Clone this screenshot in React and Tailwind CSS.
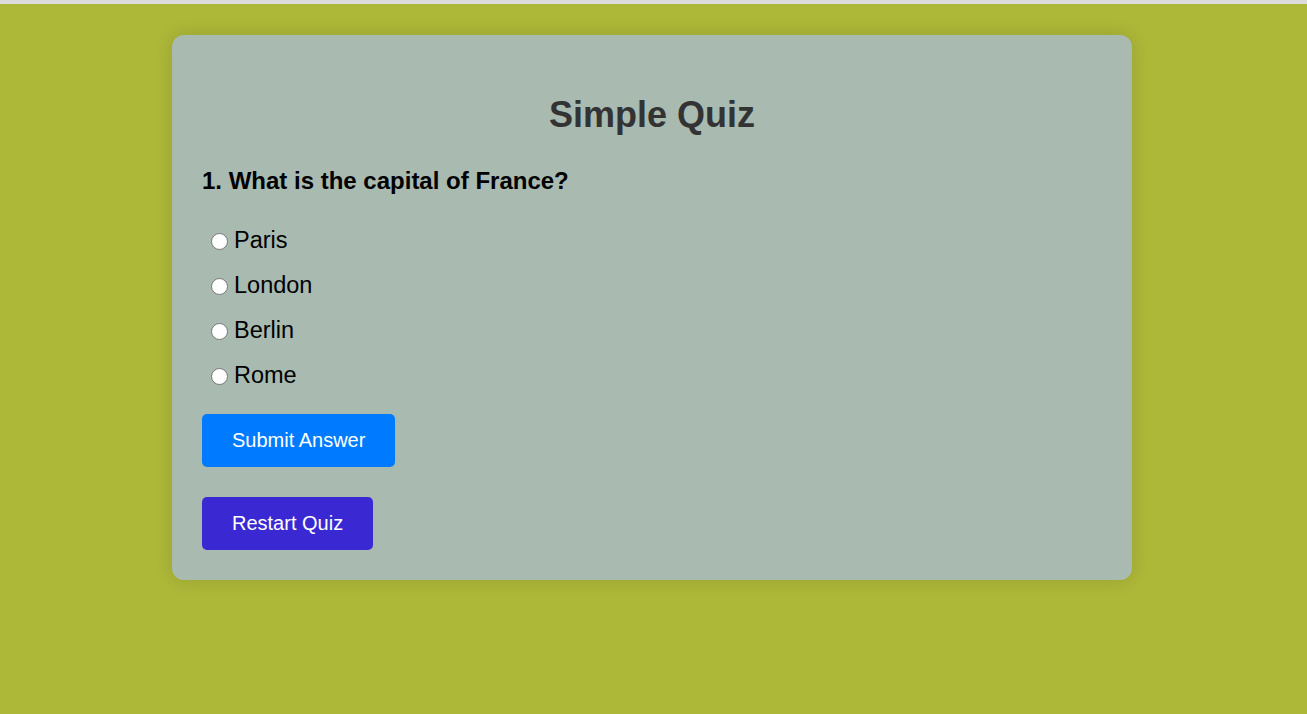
import React from "react";

export default function App() {
  const options = ["Paris", "London", "Berlin", "Rome"];
  return (
    <div
      className="min-h-[714px] bg-[#adb738] flex flex-col"
      style={{ fontFamily: '"Liberation Sans", Arial, sans-serif' }}
    >
      <div className="h-[4px] bg-[#dcdcdc]" />
      <div className="flex justify-center pr-[3px] pt-[31px]">
        <div className="w-[960px] bg-[#a9bab0] rounded-[12px] shadow-[0_0_18px_rgba(0,0,0,0.12)] px-[30px] pt-[30px] pb-[30px]">
          <h1 className="mt-[29px] text-center text-[36px] leading-[41px] font-bold text-[#333333]">
            Simple Quiz
          </h1>
          <h2 className="mt-[32px] text-[24px] leading-[28px] font-bold text-black">
            1. What is the capital of France?
          </h2>
          <div className="mt-[23px] flex flex-col">
            {options.map((o) => (
              <label key={o} className="h-[45px] flex items-center text-[23.5px] text-black">
                <input
                  type="radio"
                  name="q"
                  className="appearance-none w-[17px] h-[17px] rounded-full border border-[#767676] bg-white ml-[9px] mr-[6px] mt-[1px] shrink-0"
                />
                <span>{o}</span>
              </label>
            ))}
          </div>
          <div className="mt-[16px] flex flex-col items-start gap-[30px]">
            <button className="bg-[#007bff] text-white text-[20px] leading-[23px] px-[30px] py-[15px] rounded-[5px]">
              Submit Answer
            </button>
            <button className="bg-[#3a29d3] text-white text-[20px] leading-[23px] px-[30px] py-[15px] rounded-[5px]">
              Restart Quiz
            </button>
          </div>
        </div>
      </div>
    </div>
  );
}
